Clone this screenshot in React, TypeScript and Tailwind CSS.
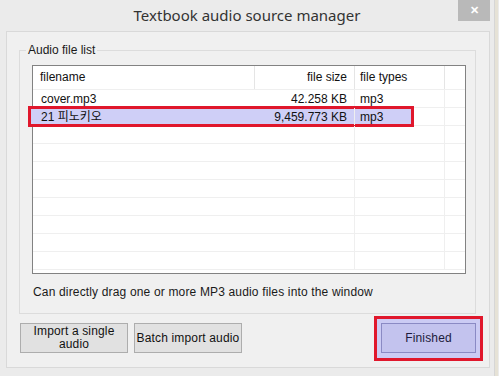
import React from "react";

type Row = { name: string; size: string; kind: string; selected?: boolean };

const rows: Row[] = [
  { name: "cover.mp3", size: "42.258 KB", kind: "mp3" },
  { name: "21 피노키오", size: "9,459.773 KB", kind: "mp3", selected: true },
];

const EMPTY_ROWS = 8;

const ui = { fontFamily: '"Liberation Sans", "Noto Sans CJK KR", sans-serif' };

function ListRow({ row }: { row?: Row }) {
  return (
    <div className="relative flex h-[18px] border-b border-[#efefef] text-[12px] leading-[18px] text-[#111]">
      {row?.selected && (
        <div className="absolute -left-[5px] -top-[2px] h-[21px] w-[386px] border-[3px] border-[#e0172c] bg-[#cfcff7]" />
      )}
      <div className="relative w-[222px] truncate pl-[8px]">{row?.name}</div>
      <div className="relative w-[100px] border-r border-[#efefef] pr-[7px] text-right">
        {row?.size}
      </div>
      <div className="relative w-[90px] border-r border-[#efefef] pl-[5px]">{row?.kind}</div>
      <div className="w-[20px]" />
    </div>
  );
}

export default function App() {
  return (
    <div className="flex h-[376px] w-[499px] bg-[#ebebeb]" style={ui}>
      <div className="flex h-full w-[495px] flex-col border-r border-[#d6d6d6] bg-[#ebebeb]">
        {/* Title bar */}
        <div className="relative flex h-[31px] items-center justify-center pb-[1px]">
          <span
            className="text-[15px] text-[#333]"
            style={{ fontFamily: '"Noto Sans", sans-serif' }}
          >
            Textbook audio source manager
          </span>
          <div className="absolute right-[4px] top-0 flex h-[21px] w-[32px] items-center justify-center bg-[#b9b9b9] text-[11px] font-bold leading-none text-white">
            ✕
          </div>
        </div>

        {/* Client area */}
        <div className="ml-[6px] flex h-[337px] w-[484px] flex-col border border-[#d9d9d9] bg-[#f0f0f0]">
          {/* Group box */}
          <div className="relative ml-[12px] mt-[18px] w-[457px] border border-[#dcdcdc] px-[12px] pb-[13px] pt-[14px]">
            <span className="absolute -top-[9px] left-[6px] bg-[#f0f0f0] px-[2px] text-[12px] leading-[16px] text-[#1a1a1a]">
              Audio file list
            </span>

            <div className="h-[209px] w-[434px] border border-[#828282] bg-white">
              <div className="flex h-[24px] border-b border-[#efefef] text-[12px] leading-[23px] text-[#111]">
                <div className="w-[222px] border-r border-[#e5e5e5] pl-[7px]">filename</div>
                <div className="w-[100px] border-r border-[#e5e5e5] pr-[7px] text-right">
                  file size
                </div>
                <div className="w-[90px] border-r border-[#e5e5e5] pl-[5px]">file types</div>
                <div className="w-[20px]" />
              </div>
              {rows.map((r) => (
                <ListRow key={r.name} row={r} />
              ))}
              {Array.from({ length: EMPTY_ROWS }).map((_, i) => (
                <ListRow key={i} />
              ))}
            </div>

            <p className="mt-[10px] h-[16px] pl-[1px] text-[12px] leading-[16px] tracking-[0.16px] text-[#1a1a1a]">
              Can directly drag one or more MP3 audio files into the window
            </p>
          </div>

          {/* Buttons */}
          <div className="ml-[13px] mr-[6px] mt-[9px] flex h-[30px] items-center gap-[6px]">
            <button className="h-[30px] w-[108px] border border-[#adadad] bg-[#e1e1e1] text-[12px] leading-[13px] tracking-[0.15px] text-[#111]">
              Import a single
              <br />
              audio
            </button>
            <button className="h-[30px] w-[108px] border border-[#adadad] bg-[#e1e1e1] text-[12px] tracking-[0.15px] text-[#111]">
              Batch import audio
            </button>
            <div className="ml-auto flex h-[45px] w-[109px] shrink-0 items-center justify-center border-[3px] border-[#e0172c] bg-[#cbcbf4]">
              <button className="h-[30px] w-[95px] border border-[#8a8ac4] bg-[#c3c3ee] text-[12px] tracking-[0.15px] text-[#1c1c3c]">
                Finished
              </button>
            </div>
          </div>
        </div>
      </div>
      <div className="h-full w-[3px] bg-[#e6e2d6]" />
    </div>
  );
}
